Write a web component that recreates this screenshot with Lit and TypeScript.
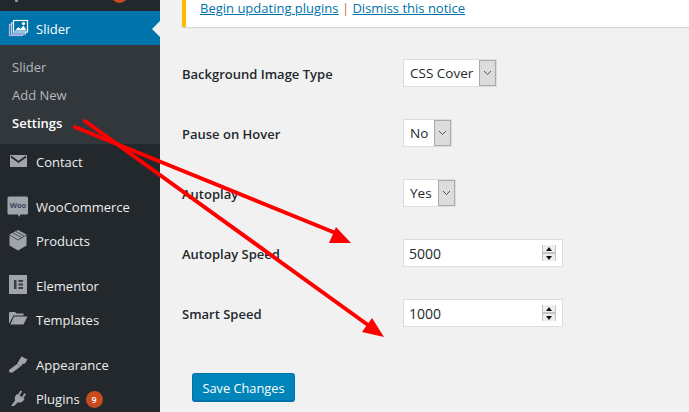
import { LitElement, html, css, svg, unsafeCSS } from "lit";
import { customElement } from "lit/decorators.js";

const FONT = unsafeCSS(`"Open Sans", "Noto Sans", sans-serif`);

const ic = (body: unknown) => html`<svg class="ic" viewBox="0 0 20 20" width="20" height="20">${body}</svg>`;

const icons = {
  slider: ic(svg`<g fill="none" stroke-width="1.2"><rect x="1.500" y="6.500" width="13" height="11" stroke="#b9b4e8"/><rect x="3.500" y="5" width="14" height="11" fill="#0073aa" stroke="#d8d4f4"/><rect x="5.500" y="2.500" width="14" height="11.500" fill="#0073aa" stroke="#fff"/></g><path d="M7 12.500l3.500-3.500 2 2 3-3.500 3 5z" fill="#fff"/><circle cx="15.500" cy="5.500" r="1.600" fill="#fff"/>`),
  mail: ic(svg`<rect x="2" y="3" width="17" height="12" fill="#a0a5aa"/><path d="M3 4.500l7.500 5.500 7.500-5.500" fill="none" stroke="#23282d" stroke-width="1.800"/>`),
  woo: ic(svg`<path d="M1.500 -0.500h17a1.500 1.500 0 0 1 1.500 1.500v15a1.500 1.500 0 0 1-1.500 1.500h-6l-1.500 2.500-1-2.500h-9a1.500 1.500 0 0 1-1.500-1.500v-15a1.500 1.500 0 0 1 1.500-1.500z" fill="#a0a5aa"/><text x="10" y="11" text-anchor="middle" font-size="7.500" font-weight="700" fill="#3b4560" font-family="Open Sans, sans-serif">Woo</text>`),
  box: ic(svg`<path d="M10 -1l8.500 4.500v11L10 19.500l-8.500-5v-11z" fill="#a0a5aa"/><path d="M1.500 4L10 9l8.500-5M5 2l8.500 4.500M8 .5l8 4.500" fill="none" stroke="#23282d" stroke-width=".7"/>`),
  el: ic(svg`<rect x="1" y="-1" width="18" height="19" fill="#a0a5aa"/><path d="M6 4h2.500v9H6zM10.500 4h4.500v2h-4.500zM10.500 7.500h4.500v2h-4.500zM10.500 11h4.500v2h-4.500z" fill="#3a3f45"/>`),
  folder: ic(svg`<path d="M1 3a1 1 0 0 1 1-1h5l1.500 1.500h7v2H5.500L1.500 13H1z" fill="#a0a5aa"/><path d="M6 6.500H19.500L15.500 14.500H2.300z" fill="#a0a5aa"/>`),
  brush: ic(svg`<path d="M11 5.500L13.500 1.500l6 3-2.500 4-2.500.5-1.500 2.500-4-2.500z" fill="#a0a5aa"/><path d="M9 9l3.500 2.500L4.500 17.500H1.500l-.5-2.500z" fill="#a0a5aa"/>`),
  plug: ic(svg`<path d="M12.500 1.500l1.600 1.100-2.600 3.800 2.300 1.600 2.600-3.800 1.600 1.100-2.600 3.800 1.200.9-1.400 1.800c-1.400 1.800-3.500 2.200-5.300 1.400L6 17H3l4.300-5.700c-.9-1.600-.7-3.500.5-4.900l1.300-1.500 1 .7z" fill="#a0a5aa"/>`),
};

@customElement("app-root")
export class AppRoot extends LitElement {
  static styles = css`
    :host {
      display: block;
      position: relative;
      width: 689px;
      height: 412px;
      overflow: hidden;
      background: #f1f1f1;
      font-family: ${FONT};
      font-size: 13px;
      color: #23282d;
    }
    .page { display: flex; height: 412px; }
    .side {
      width: 160px;
      flex: none;
      height: 412px;
      background: #23282d;
      color: #eee;
      display: flex;
      flex-direction: column;
      overflow: hidden;
      position: relative;
    }
    .top { height: 11px; flex: none; }
    .top-badge {
      position: absolute;
      left: 111px;
      top: -14px;
      width: 17px;
      height: 17px;
      border-radius: 50%;
      background: #ca4a1f;
    }
    .top-mark {
      position: absolute;
      left: 15px;
      top: 0;
      width: 3px;
      height: 2px;
      background: #8a8f94;
    }
    .active {
      height: 34px;
      flex: none;
      background: #0073aa;
      color: #fff;
      position: relative;
    }
    .active span { padding-top: 1px; }
    .active::after {
      content: "";
      position: absolute;
      right: 0;
      top: 10px;
      border: 8px solid transparent;
      border-right-color: #f1f1f1;
      border-left-width: 0;
    }
    .item {
      display: flex;
      align-items: center;
      height: 34px;
      flex: none;
      padding-left: 8px;
      gap: 8px;
    }
    .ic { flex: none; display: block; overflow: visible; }
    .sub {
      background: #32373c;
      height: 99px;
      flex: none;
      padding-top: 8px;
      box-sizing: border-box;
      display: flex;
      flex-direction: column;
    }
    .sub a {
      height: 28px;
      line-height: 28px;
      padding-left: 12px;
      color: #b4b9be;
    }
    .sub a.cur { color: #fff; font-weight: 600; }
    .gap-c { margin-top: 1px; }
    .gap-a { margin-top: 11px; }
    .badge {
      width: 17px;
      height: 17px;
      margin-left: -2px;
      border-radius: 50%;
      background: #ca4a1f;
      color: #fff;
      font-size: 9px;
      font-weight: 600;
      line-height: 17px;
      text-align: center;
    }
    .main { flex: 1; min-width: 0; padding-left: 22px; display: flex; flex-direction: column; }
    .notice {
      height: 27px;
      flex: none;
      box-sizing: border-box;
      background: #fff;
      border-left: 4px solid #ffb900;
      padding-left: 14px;
      line-height: 17px;
      box-shadow: 0 1px 1px rgba(0, 0, 0, 0.1);
      color: #b07a3c;
    }
    .notice a { color: #0073aa; text-decoration: underline; }
    .rows { display: flex; flex-direction: column; padding-top: 16px; }
    .row {
      display: grid;
      grid-template-columns: 221px auto;
      align-items: center;
      justify-content: start;
      height: 60px;
      flex: none;
      font-weight: 570;
    }
    .row .label { padding-top: 2px; }
    .sel {
      display: flex;
      height: 28px;
      box-sizing: border-box;
      border: 1px solid #ddd;
      background: #fff;
      font-size: 13.500px;
      font-weight: 400;
      align-items: stretch;
      justify-self: start;
    }
    .sel span { padding: 0 6px; line-height: 26px; }
    .sel i {
      width: 17px;
      background: #dcdcdc;
      border: 1px solid #aaa;
      box-sizing: border-box;
      display: flex;
      align-items: center;
      justify-content: center;
    }
    .num {
      width: 160px;
      height: 28px;
      box-sizing: border-box;
      border: 1px solid #ddd;
      background: #fff;
      font-size: 14px;
      font-weight: 400;
      display: flex;
      align-items: center;
      justify-content: space-between;
      padding: 0 6px 0 5px;
    }
    .spin { display: flex; flex-direction: column; gap: 2px; width: 14px; height: 16px; background: #c4c4c4; padding: 0 1px; box-sizing: border-box; }
    .spin b { flex: 1; background: #eee; display: flex; align-items: center; justify-content: center; }
    .tri { width: 0; height: 0; border: 3px solid transparent; border-top: 0; border-bottom: 4px solid #111; }
    .tri.down { border-bottom: 0; border-top: 4px solid #111; }
    .save {
      align-self: flex-start;
      margin-top: 30px;
      margin-left: 10px;
      width: 103px;
      height: 29px;
      box-sizing: border-box;
      background: #0085ba;
      border: 1px solid #0073aa;
      border-bottom-width: 2px;
      border-radius: 3px;
      color: #fff;
      font-size: 12.800px;
      text-align: center;
      line-height: 28px;
    }
    .arrows { position: absolute; left: 0; top: 0; pointer-events: none; }
  `;

  private chev() {
    return html`<svg width="9" height="6" viewBox="0 0 9 6"><path d="M1 1l3.500 3.500L8 1" fill="none" stroke="#555" stroke-width="1"/></svg>`;
  }

  private select(t: string) {
    return html`<div class="sel"><span>${t}</span><i>${this.chev()}</i></div>`;
  }

  private number(t: string) {
    return html`<div class="num"><span>${t}</span><div class="spin"><b><div class="tri"></div></b><b><div class="tri down"></div></b></div></div>`;
  }

  render() {
    return html`
      <div class="page">
        <nav class="side">
          <div class="top"><span class="top-mark"></span><span class="top-badge"></span></div>
          <div class="item active">${icons.slider}<span>Slider</span></div>
          <div class="sub">
            <a>Slider</a>
            <a>Add New</a>
            <a class="cur">Settings</a>
          </div>
          <div class="item gap-c">${icons.mail}<span>Contact</span></div>
          <div class="item gap-a">${icons.woo}<span>WooCommerce</span></div>
          <div class="item">${icons.box}<span>Products</span></div>
          <div class="item gap-a">${icons.el}<span>Elementor</span></div>
          <div class="item">${icons.folder}<span>Templates</span></div>
          <div class="item gap-a">${icons.brush}<span>Appearance</span></div>
          <div class="item">${icons.plug}<span>Plugins</span><span class="badge">9</span></div>
        </nav>
        <main class="main">
          <div class="notice"><a>Begin updating plugins</a> | <a>Dismiss this notice</a></div>
          <div class="rows">
            <div class="row"><span class="label">Background Image Type</span>${this.select("CSS Cover")}</div>
            <div class="row"><span class="label">Pause on Hover</span>${this.select("No")}</div>
            <div class="row"><span class="label">Autoplay</span>${this.select("Yes")}</div>
            <div class="row"><span class="label">Autoplay Speed</span>${this.number("5000")}</div>
            <div class="row"><span class="label">Smart Speed</span>${this.number("1000")}</div>
          </div>
          <div class="save">Save Changes</div>
        </main>
      </div>
      <svg class="arrows" width="689" height="412" viewBox="0 0 689 412">
        <path d="M75 127L338 234" stroke="#f00" stroke-width="4" stroke-linecap="round" fill="none"/>
        <path d="M336 227L351 243L329 243z" fill="#f00"/>
        <path d="M85 121L368 325" stroke="#f00" stroke-width="4" stroke-linecap="round" fill="none"/>
        <path d="M372 318L384 337L362 332z" fill="#f00"/>
      </svg>
    `;
  }
}
